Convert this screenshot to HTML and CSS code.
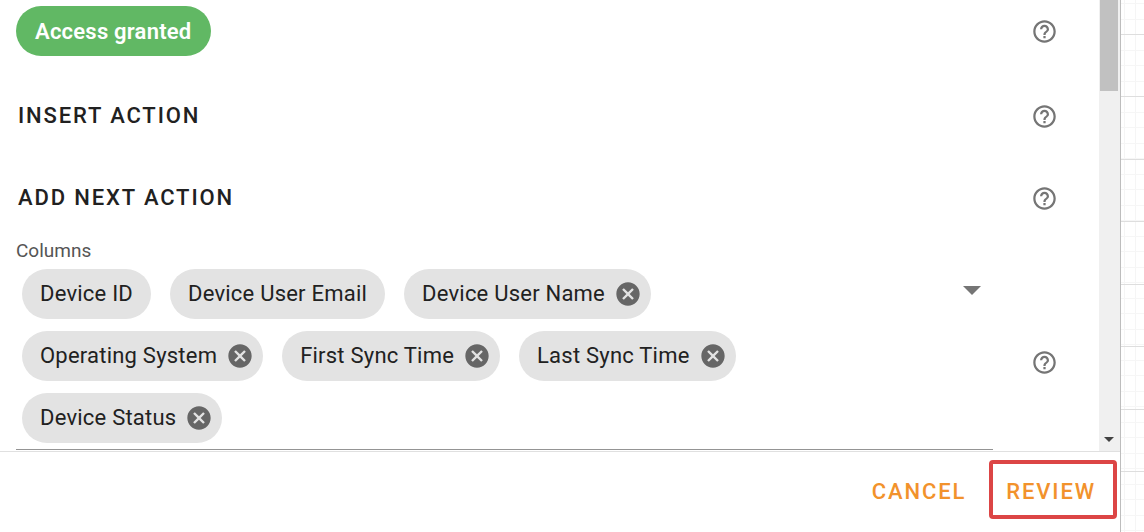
FILE: index.html
```
<!DOCTYPE html>
<html lang="en">
<head>
    <meta charset="UTF-8">
    <meta name="viewport" content="width=device-width, initial-scale=1.0">
    <title>Add Next Action</title>
    <link rel="stylesheet" href="styles.css">
</head>
<body>
    <!-- Shared icon shapes -->
    <svg class="icon-defs" aria-hidden="true">
        <symbol id="icon-help" viewBox="0 0 24 24">
            <path d="M11 18h2v-2h-2v2zm1-16C6.48 2 2 6.48 2 12s4.48 10 10 10 10-4.48 10-10S17.52 2 12 2zm0 18c-4.41 0-8-3.59-8-8s3.59-8 8-8 8 3.59 8 8-3.59 8-8 8zm0-14c-2.21 0-4 1.79-4 4h2c0-1.1.9-2 2-2s2 .9 2 2c0 2-3 1.75-3 5h2c0-2.25 3-2.5 3-5 0-2.21-1.79-4-4-4z"/>
        </symbol>
        <symbol id="icon-cancel" viewBox="0 0 24 24">
            <path d="M12 2C6.47 2 2 6.47 2 12s4.47 10 10 10 10-4.47 10-10S17.53 2 12 2zm5 13.59L15.59 17 12 13.41 8.41 17 7 15.59 10.59 12 7 8.41 8.41 7 12 10.59 15.59 7 17 8.41 13.41 12 17 15.59z"/>
        </symbol>
    </svg>

    <div class="panel">
        <div class="panel-view">
            <main class="content">
                <div class="row status-row">
                    <span class="status">Access granted</span>
                    <button type="button" class="help" aria-label="Help"><svg><use href="#icon-help"/></svg></button>
                </div>
                <div class="row section-row">
                    <h2>Insert action</h2>
                    <button type="button" class="help" aria-label="Help"><svg><use href="#icon-help"/></svg></button>
                </div>
                <div class="row section-row">
                    <h2>Add next action</h2>
                    <button type="button" class="help" aria-label="Help"><svg><use href="#icon-help"/></svg></button>
                </div>

                <div class="field-label" id="columnsLabel">Columns</div>
                <div class="row field-row">
                    <div class="field" role="group" aria-labelledby="columnsLabel">
                        <ul class="chips">
                            <li class="chip">Device ID</li>
                            <li class="chip">Device User Email</li>
                            <li class="chip removable">Device User Name<button type="button" class="remove" aria-label="Remove"><svg><use href="#icon-cancel"/></svg></button></li>
                            <li class="chip removable">Operating System<button type="button" class="remove" aria-label="Remove"><svg><use href="#icon-cancel"/></svg></button></li>
                            <li class="chip removable">First Sync Time<button type="button" class="remove" aria-label="Remove"><svg><use href="#icon-cancel"/></svg></button></li>
                            <li class="chip removable">Last Sync Time<button type="button" class="remove" aria-label="Remove"><svg><use href="#icon-cancel"/></svg></button></li>
                            <li class="chip removable">Device Status<button type="button" class="remove" aria-label="Remove"><svg><use href="#icon-cancel"/></svg></button></li>
                        </ul>
                        <button type="button" class="dropdown" aria-label="Show columns"></button>
                    </div>
                    <button type="button" class="help" aria-label="Help"><svg><use href="#icon-help"/></svg></button>
                </div>
            </main>
            <div class="scrollbar">
                <div class="thumb"></div>
                <div class="arrow-down"></div>
            </div>
        </div>
        <footer class="actions">
            <button type="button" class="action">Cancel</button>
            <button type="button" class="action highlighted">Review</button>
        </footer>
    </div>
    <div class="canvas"></div>
</body>
</html>
```
FILE: styles.css
```
* {
    box-sizing: border-box;
    margin: 0;
    padding: 0;
}

body {
    display: flex;
    height: 100vh;
    overflow: hidden;
    background: #fff;
    color: #212121;
    font-family: Roboto, Arial, sans-serif;
    font-size: 22px;
    line-height: 26px;
}

button {
    border: none;
    background: none;
    font: inherit;
    cursor: pointer;
}

svg {
    display: block;
    width: 100%;
    height: 100%;
    fill: currentColor;
}

.icon-defs {
    display: none;
}

.panel {
    display: flex;
    flex: 1;
    flex-direction: column;
    min-width: 0;
    border-right: 1px solid #bdbdbd;
}

.panel-view {
    display: flex;
    flex: 1;
    min-height: 0;
    overflow: hidden;
}

.content {
    flex: 1;
    padding: 6px 41px 0 16px;
}

.row {
    display: flex;
    align-items: center;
    justify-content: space-between;
}

.status-row {
    margin-bottom: 19px;
}

.status {
    padding: 13px 20px 11px 19px;
    border-radius: 25px;
    background: #61b864;
    color: #fff;
    font-weight: 600;
    letter-spacing: 0.01em;
}

.section-row {
    height: 82px;
}

h2 {
    padding-left: 2px;
    font-size: 22px;
    font-weight: 500;
    letter-spacing: 0.085em;
    text-transform: uppercase;
}

.help {
    flex: none;
    width: 27px;
    height: 27px;
    color: #757575;
}

.field-label {
    margin-bottom: 7px;
    color: #555;
    font-size: 19px;
    line-height: 23px;
}

.field-row {
    gap: 38px;
}

.field-row .help {
    margin-top: 5px;
}

.field {
    display: flex;
    flex: 1;
    align-items: flex-start;
    justify-content: space-between;
    padding: 0 12px 6px 6px;
    border-bottom: 1px solid #949494;
}

.chips {
    display: flex;
    flex: 1;
    flex-wrap: wrap;
    gap: 12px 19px;
    max-width: 760px;
    list-style: none;
}

.chip {
    display: flex;
    align-items: center;
    gap: 9px;
    height: 50px;
    padding: 0 18px;
    border-radius: 25px;
    background: #e3e3e3;
    letter-spacing: 0.01em;
}

.chip.removable {
    padding-right: 9px;
}

.remove {
    width: 28px;
    height: 28px;
    color: #666;
}

.dropdown {
    margin-top: 17px;
    border: 9px solid transparent;
    border-top-color: #757575;
    border-bottom: none;
}

.scrollbar {
    display: flex;
    flex-direction: column;
    justify-content: space-between;
    align-items: center;
    width: 21px;
    padding: 0 2px 9px 1px;
    background: #f0f0f0;
}

.thumb {
    width: 100%;
    height: 91px;
    background: #c1c1c1;
}

.arrow-down {
    border: 5px solid transparent;
    border-top-color: #424242;
    border-bottom: none;
}

.actions {
    display: flex;
    align-items: center;
    justify-content: flex-end;
    gap: 7px;
    height: 81px;
    padding: 0 3px 5px;
    border-top: 1px solid #e0e0e0;
}

.action {
    padding: 5px 16px 0;
    color: #f2922c;
    font-weight: 500;
    letter-spacing: 0.085em;
    text-transform: uppercase;
}

.action.highlighted {
    height: 59px;
    padding: 5px 17px 0 13px;
    border: 4px solid #dc4545;
    border-radius: 4px;
}

/* Grid paper behind the panel */
.canvas {
    width: 23px;
    background:
        linear-gradient(#dedede 1px, transparent 1px) 0 34px / 100% 125px,
        linear-gradient(#dedede 1px, transparent 1px) 0 96px / 100% 125px,
        linear-gradient(#f6f6f6 1px, transparent 1px) 0 50px / 100% 31px,
        linear-gradient(#f6f6f6 1px, transparent 1px) 0 65px / 100% 31px,
        linear-gradient(90deg, #f5f5f5 1px, transparent 1px) 3px 0 / 11px 100%;
}
```
